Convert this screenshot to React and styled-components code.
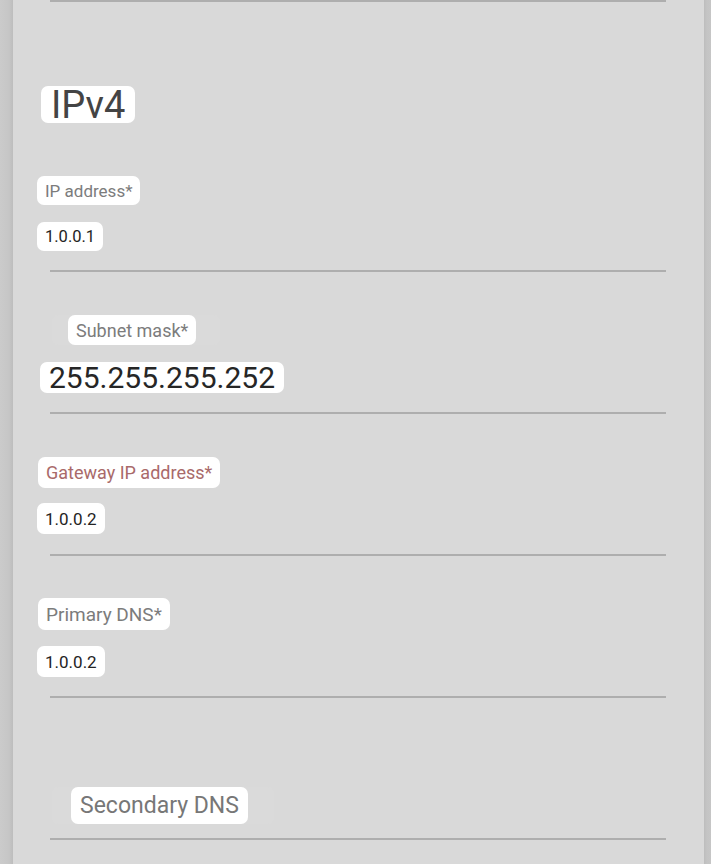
import React from "react";
import styled, { createGlobalStyle } from "styled-components";

const Global = createGlobalStyle`
  html, body { margin: 0; padding: 0; background: #c8c8c8; }
  body { font-family: Roboto, "Noto Sans", "Liberation Sans", sans-serif; }
`;

const Page = styled.div`
  display: flex;
  width: 711px;
  height: 864px;
  overflow: hidden;
  background: #c9c9c9;
`;

const EdgeLeft = styled.div`
  width: 13px;
  flex: none;
  background: linear-gradient(to right, #cbcbcb 0%, #c6c6c6 70%, #bdbdbd 100%);
`;

const EdgeRight = styled.div`
  flex: 1;
  background: linear-gradient(to right, #bdbdbd 0%, #c4c4c4 40%, #c6c6c6 100%);
`;

const Panel = styled.div`
  width: 691px;
  flex: none;
  background: #d9d9d9;
  display: flex;
  flex-direction: column;
  align-items: flex-start;
  padding-left: 24px;
  box-sizing: border-box;
`;

const Rule = styled.div`
  align-self: stretch;
  height: 2px;
  margin: 0 38px 0 13px;
  background: #aeaeae;
  flex: none;
`;

const Chip = styled.span`
  display: inline-flex;
  align-items: center;
  background: #ffffff;
  border-radius: 7px;
  box-sizing: border-box;
  white-space: nowrap;
  height: ${(p) => p.$h}px;
  padding: 0 ${(p) => p.$px || 8}px;
  font-size: ${(p) => p.$size}px;
  color: ${(p) => p.$color || "#7c7c7c"};
  margin-left: ${(p) => p.$ml || 0}px;
  letter-spacing: 0;
`;

const Heading = styled(Chip)`
  margin-top: 84px;
  color: #444444;
  font-weight: 400;
`;

const Field = styled.div`
  display: flex;
  flex-direction: column;
  align-items: flex-start;
  gap: ${(p) => p.$gap || 0}px;
  padding-top: ${(p) => p.$pt}px;
  padding-bottom: ${(p) => p.$pb}px;
`;

const Ghost = styled.div`
  display: flex;
  align-items: center;
  margin-left: ${(p) => p.$ml || 0}px;
  padding: ${(p) => p.$pad || "0"};
  background: #dadada;
  border-radius: 6px;
`;

export default function App() {
  return (
    <>
      <Global />
      <Page>
        <EdgeLeft />
        <Panel>
          <Rule />
          <Heading $h={37} $size={38} $px={10} $ml={4}>IPv4</Heading>
          <Field $pt={53} $gap={17} $pb={19}>
            <Chip $h={29} $size={17}>IP address*</Chip>
            <Chip $h={29} $size={16.5} $color="#242424">1.0.0.1</Chip>
          </Field>
          <Rule />
          <Field $pt={43} $gap={17} $pb={19}>
            <Ghost $ml={15} $pad="0 24px 0 16px">
              <Chip $h={30} $size={18}>Subnet mask*</Chip>
            </Ghost>
            <Chip $h={31} $size={30} $px={9} $ml={3} $color="#262626">255.255.255.252</Chip>
          </Field>
          <Rule />
          <Field $pt={43} $gap={15} $pb={20}>
            <Chip $h={31} $size={18} $ml={1} $color="#a96a6a">Gateway IP address*</Chip>
            <Chip $h={31} $size={17} $color="#242424">1.0.0.2</Chip>
          </Field>
          <Rule />
          <Field $pt={42} $gap={16} $pb={19}>
            <Chip $h={32} $size={19} $ml={1}>Primary DNS*</Chip>
            <Chip $h={31} $size={17} $color="#242424">1.0.0.2</Chip>
          </Field>
          <Rule />
          <Field $pt={89} $pb={14}>
            <Ghost $ml={15} $pad="0 26px 0 19px">
              <Chip $h={37} $size={23} $px={9} $color="#777777">Secondary DNS</Chip>
            </Ghost>
          </Field>
          <Rule />
        </Panel>
        <EdgeRight />
      </Page>
    </>
  );
}
